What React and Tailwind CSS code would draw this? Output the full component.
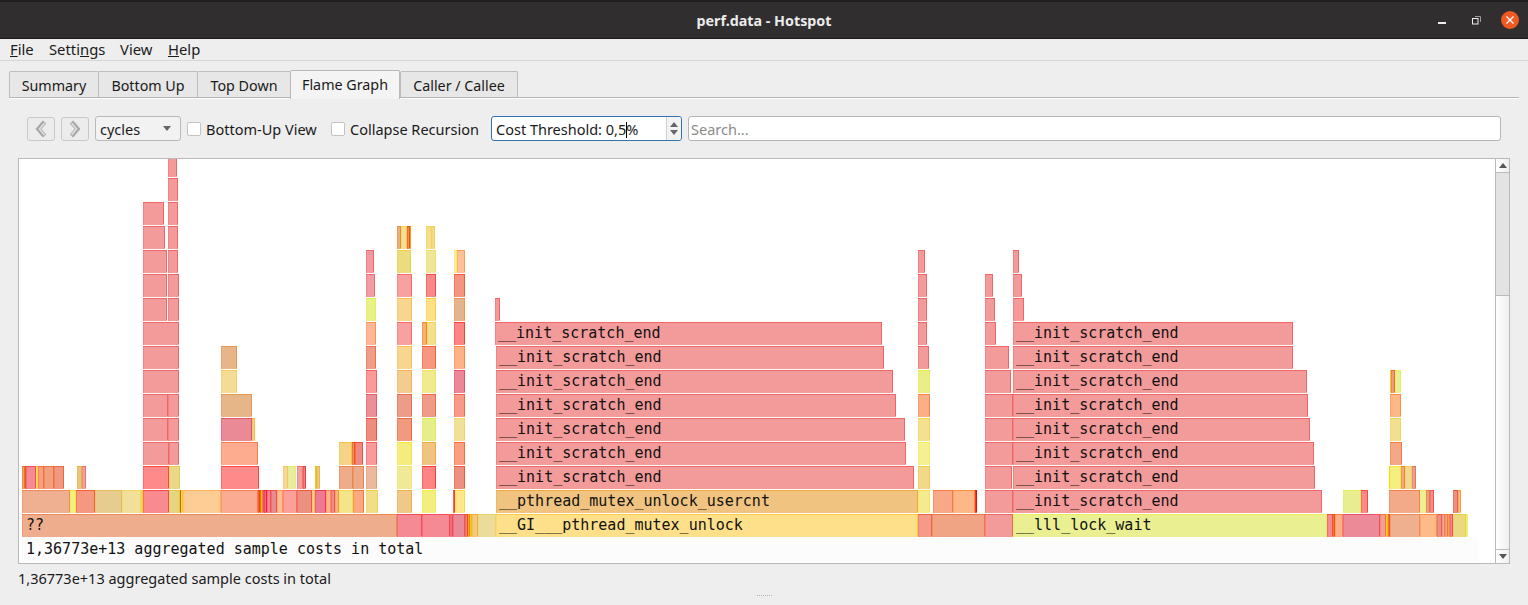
import React from 'react';

const MONO = "font-['DejaVu_Sans_Mono',monospace]";
const SANS = "font-['Noto_Sans',sans-serif]";

const INIT = '__init_scratch_end';
const PINK = '#f39a9a';

// frames per row, row 0 is the bottom one: [x1, x2, fill, label]
const rows = [
  [
    [22, 397, '#eeae8e', '??'], [397, 422, '#f48a94'], [422, 450, '#f58a94'], [450, 451, '#f2a090'], [451, 453, '#f58a94'],
    [453, 465, '#e88a9a'], [465, 468, '#f08a70'], [468, 470, '#f9b060'], [470, 472, '#f0d060'], [472, 478, '#f5c880'],
    [478, 496, '#ecdc9a'], [496, 918, '#ffe08a', '__GI___pthread_mutex_unlock'], [918, 932, '#f59a88'], [932, 985, '#f0a484'],
    [985, 1013, PINK], [1013, 1327, '#eaef92', '__lll_lock_wait'], [1327, 1333, '#f48a90'], [1333, 1335, '#f09050'],
    [1335, 1343, '#fbb08a'], [1343, 1380, '#ec8a9a'], [1380, 1386, '#f3a090'], [1386, 1388, '#f0d060'], [1388, 1390, '#f09060'],
    [1390, 1420, '#efb090'], [1420, 1437, '#feba88'], [1437, 1442, '#e89088'], [1442, 1445, '#f2a898'], [1445, 1448, '#f0a880'],
    [1448, 1450, '#f8b080'], [1450, 1453, '#f08a90'], [1453, 1466, '#ead980'], [1466, 1468, '#edf09a'],
  ],
  [
    [22, 70, '#eeb090'], [70, 76, '#f5ee80'], [76, 95, '#f5987f'], [95, 122, '#e6cc8e'], [122, 141, '#f1e09a'], [141, 143, '#f5e070'],
    [143, 169, '#f98a90'], [169, 180, '#e5d580'], [180, 181, '#f09050'], [181, 183, '#f5e070'], [183, 221, '#fdcd95'],
    [221, 258, '#fcab93'], [258, 260, '#f08060'], [260, 261, '#f0a040'], [261, 262, '#f5d060'], [262, 264, '#f09080'],
    [264, 267, '#f26a80'], [267, 271, '#f58a90'], [271, 277, '#e88a90'], [277, 283, '#fdbd90'], [283, 297, '#fca09a'],
    [297, 312, '#ec9080'], [312, 315, '#f8d090'], [315, 326, '#ee7a90'], [326, 331, '#fdb58a'], [331, 335, '#f08a90'],
    [335, 339, '#f0b880'], [339, 353, '#f5e58a'], [353, 364, '#f9a880'], [366, 378, '#f2dd88'], [397, 412, '#f0c888'],
    [422, 436, '#f2ee80'], [453, 455, '#f08080'], [455, 465, '#ffe78a'],
    [496, 918, '#f0c480', '__pthread_mutex_unlock_usercnt'], [918, 930, '#f5ea90'], [933, 953, '#f9a888'], [953, 975, '#feb888'],
    [975, 977, '#f06030'], [985, 1013, PINK], [1013, 1322, PINK, INIT], [1343, 1361, '#e8ee90'], [1361, 1368, '#ff8a8a'],
    [1389, 1420, '#f3aa88'], [1420, 1426, '#eeee9a'], [1426, 1430, '#eaa080'], [1430, 1434, '#f49090'], [1453, 1458, '#ee9080'],
    [1458, 1461, '#fbbc88'],
  ],
  [
    [22, 25, '#f0a070'], [25, 26, '#d89040'], [26, 36, '#f48a94'], [36, 38, '#f5e080'], [38, 44, '#f5a080'], [44, 54, '#f2a080'],
    [54, 64, '#ef9a80'], [77, 82, '#e8c580'], [82, 86, '#f2a0a0'], [143, 169, '#ff8a8a'], [169, 180, '#e8d888'], [221, 259, '#ff8a8a'],
    [283, 288, '#f5d898'], [288, 296, '#e8eca0'], [297, 303, '#f2a0a0'], [303, 306, '#f08080'], [315, 317, '#e8d060'], [317, 320, '#f0c890'],
    [339, 353, '#eeac8a'], [353, 364, '#edaa88'], [366, 377, '#ebb8a0'], [397, 412, '#f0ea98'], [422, 436, '#ff8585'], [454, 465, '#ec9080'],
    [496, 914, PINK, INIT], [918, 930, '#f0da88'], [985, 1012, PINK], [1013, 1315, PINK, INIT], [1389, 1390, '#f5e860'], [1390, 1401, '#f5ee80'],
    [1401, 1405, '#f0aa80'], [1405, 1412, '#f0da90'], [1412, 1416, '#e8a090'],
  ],
  [
    [143, 168.5, PINK], [168.5, 179, PINK], [221, 258, '#fdac90'], [339, 352, '#f5d488'], [352, 355, '#f09060'], [355, 363, '#f08a80'],
    [366, 377, '#fc9a9a'], [397, 412, '#f5ec80'], [422, 436, '#f0c480'], [454, 465, '#f8a080'], [496, 906, PINK, INIT], [918, 930, '#f6f095'],
    [985, 1013, PINK], [1013, 1314, PINK, INIT], [1390, 1402, '#f5a888'],
  ],
  [
    [143, 167.5, PINK], [167.5, 179, PINK], [221, 252, '#ea8a96'], [252, 255, '#f5d088'], [366, 377, '#ee8c80'], [397, 412, '#f09a80'],
    [422, 436, '#e6ee8a'], [454, 465, '#f0e09a'], [496, 905, PINK, INIT], [918, 930, '#f4e08e'], [985, 1013, PINK], [1013, 1310, PINK, INIT],
    [1390, 1401, '#f0e090'],
  ],
  [
    [143, 167.5, PINK], [167.5, 179, PINK], [221, 252, '#e6b588'], [366, 377, '#ec9098'], [397, 412, '#ec9c88'], [422, 436, '#ee9c88'],
    [454, 465, '#f89a88'], [496, 896, PINK, INIT], [918, 930, '#f9b088'], [985, 1013, PINK], [1013, 1308, PINK, INIT], [1390, 1401, '#feb888'],
  ],
  [
    [143, 179, PINK], [221, 237, '#f5dc95'], [366, 377, '#fc9a9a'], [397, 412, '#f4cc90'], [422, 436, '#f0ea90'], [454, 465, '#ea8898'],
    [496, 893, PINK, INIT], [918, 930, '#eaee88'], [985, 1011, PINK], [1013, 1307, PINK, INIT], [1390, 1391, '#f0e060'], [1391, 1395, '#f09a80'],
    [1395, 1401, '#e8f090'],
  ],
  [
    [143, 179, PINK], [221, 237, '#e8b48a'], [366, 376, '#ee9e88'], [397, 412, '#f8d690'], [422, 436, '#f69880'], [454, 465, '#feb288'],
    [496, 884, PINK, INIT], [918, 929, PINK], [985, 1009, PINK], [1013, 1293, PINK, INIT],
  ],
  [
    [143, 179, PINK], [366, 376, '#feb898'], [397, 412, '#f9a0a0'], [422, 427, '#f8b070'], [427, 436, '#f2e090'], [454, 465, '#ff8585'],
    [495, 882, PINK, INIT], [918, 927, PINK], [985, 996, PINK], [1013, 1293, PINK, INIT],
  ],
  [
    [143, 166.5, PINK], [168, 179, PINK], [366, 376, '#e8f08a'], [397, 412, '#f8d690'], [426, 436, '#ffe188'], [454, 465, '#e6b48c'],
    [495, 500, PINK], [918, 927, PINK], [985, 995, PINK], [1013, 1024, PINK],
  ],
  [
    [143, 167, PINK], [168, 179, PINK], [366, 375, '#f09ca2'], [397, 412, '#f9a0a0'], [426, 436, '#f98a8a'], [454, 465, '#f59480'],
    [918, 927, PINK], [985, 993, PINK], [1013, 1022, PINK],
  ],
  [
    [143, 167, PINK], [168, 178, PINK], [366, 374, '#f29aa0'], [397, 411, '#ebdc80'], [426, 436, '#efe69a'], [454, 457, '#f8f09a'],
    [457, 465, '#fec098'], [918, 925, PINK], [1013, 1019, PINK],
  ],
  [
    [143, 165, PINK], [168, 178, PINK], [397, 401, '#e8b080'], [401, 407, '#f5e090'], [407, 410, '#f08a60'], [410, 411, '#f0c040'],
    [426, 432, '#f3de90'], [432, 435, '#f3de90'],
  ],
  [[143, 164, PINK], [168, 178, PINK]],
  [[168, 178, PINK]],
  [[168, 177, PINK]],
];

// border is the fill with its saturation pushed up
const edge = (hex) => {
  const c = [1, 3, 5].map((i) => parseInt(hex.slice(i, i + 2), 16));
  const max = Math.max(...c);
  return `rgb(${c.map((v) => Math.max(0, Math.round(max - (max - v) * 1.6))).join(',')})`;
};

const Frame = ({ row, x1, x2, fill, label }) => {
  const y = 514 - row * 24;
  const stroke = edge(fill);
  return (
    <g>
      <rect x={x1} y={y} width={x2 - x1} height={23} fill={fill} shapeRendering="crispEdges" />
      <path d={`M${x1} ${y + 0.5}H${x2}M${x2 - 0.5} ${y}V${y + 22}`} stroke={stroke} fill="none" shapeRendering="crispEdges" />
      <path d={`M${x1 + 0.5} ${y}V${y + 23}`} stroke={stroke} strokeOpacity="0.45" fill="none" shapeRendering="crispEdges" />
      {label && (
        <text x={x1 + (label === '??' ? 4 : 3)} y={y + 16} fill="#111" className={`${MONO} text-[15px]`}>
          {label}
        </text>
      )}
    </g>
  );
};

const FlameChart = () => (
  <svg viewBox="19 159 1476 404" className="w-[1476px] h-[404px] bg-white block shrink-0">
    <rect x="22" y="537" width="1457" height="24" fill="#fcfcfc" />
    <text x="26" y="554" fill="#111" className={`${MONO} text-[15px]`}>
      1,36773e+13 aggregated sample costs in total
    </text>
    {rows.map((frames, row) =>
      frames.map(([x1, x2, fill, label]) => (
        <Frame key={`${row}-${x1}`} row={row} x1={x1} x2={x2} fill={fill} label={label} />
      ))
    )}
  </svg>
);

const Tab = ({ label, width, active }) =>
  active ? (
    <div
      style={{ width }}
      className="h-[29px] -mb-px bg-[#f4f4f4] border border-b-0 border-[#b9b9b9] rounded-t-[2px] flex items-center justify-center text-[14.3px] text-[#1a1a1a] relative z-10"
    >
      {label}
    </div>
  ) : (
    <div
      style={{ width }}
      className="h-[26px] mt-[1px] pt-[2px] bg-[#e7e7e7] border border-b-0 border-[#bdbdbd] -mr-px rounded-t-[2px] flex items-center justify-center text-[14.3px] text-[#1a1a1a]"
    >
      {label}
    </div>
  );

const Chevron = ({ left }) => (
  <svg width="14" height="18" viewBox="0 0 14 18">
    <path d={left ? 'M10.500 2L4.500 9l6 7' : 'M3.500 2l6 7-6 7'} fill="none" stroke="#a6a6a6" strokeWidth="4.400" />
    <path d={left ? 'M10.500 3L5.500 9l5 6' : 'M3.500 3l5 6-5 6'} fill="none" stroke="#dedede" strokeWidth="1.800" />
  </svg>
);

const NavButton = ({ left }) => (
  <div className="w-7 h-6 border border-[#c8c8c8] rounded-[3px] bg-[#ececec] flex items-center justify-center">
    <Chevron left={left} />
  </div>
);

const Check = ({ label }) => (
  <div className="flex items-center gap-[5px]">
    <div className="w-[14px] h-[14px] bg-white border border-[#c4c4c4] rounded-[2px]" />
    <span className="pt-[2px]">{label}</span>
  </div>
);

export default function App() {
  return (
    <div className={`w-[1528px] h-[605px] overflow-hidden bg-[#eeeeee] flex flex-col text-[14.5px] text-[#1a1a1a] ${SANS}`}>
      {/* window title bar */}
      <div className="h-[39px] shrink-0 bg-[#302e2e] border-t-2 border-t-[#1e1e1e] border-b border-b-[#1a1a1a] flex items-center relative">
        <div className="w-full text-center text-[14.3px] font-bold text-[#ebebeb] pt-[1px]">perf.data - Hotspot</div>
        <svg width="8" height="2" className="absolute left-[1438px] top-[20px]">
          <rect width="8" height="2" fill="#eee" />
        </svg>
        <svg width="9" height="9" viewBox="0 0 9 9" className="absolute left-[1472px] top-[14px]">
          <path d="M3 .5h5.500v5.500" fill="none" stroke="#9a9a9a" />
          <rect x=".5" y="2.500" width="5.500" height="5.500" fill="none" stroke="#eee" />
        </svg>
        <div className="absolute left-[1501px] top-[9px] w-[18px] h-[18px] rounded-full bg-[#ef5a22] flex items-center justify-center">
          <svg width="8" height="8" viewBox="0 0 8 8">
            <path d="M.5.500l7 7M7.500.500l-7 7" stroke="#fff" strokeWidth="1.300" />
          </svg>
        </div>
      </div>

      {/* menu */}
      <div className="h-[22px] shrink-0 border-b border-[#d6d6d6] flex items-center pl-[10px] text-[14.8px]">
        <span className="w-[39px]"><u>F</u>ile</span>
        <span className="w-[71px]">Setti<u>n</u>gs</span>
        <span className="w-[48px]">View</span>
        <span><u>H</u>elp</span>
      </div>

      {/* tabs */}
      <div className="mt-[9px] mx-[9px] w-[1510px] h-[28px] shrink-0 border-b border-[#b5b5b5] shadow-[0_1px_0_#ffffff] flex items-start">
        <Tab label="Summary" width={90} />
        <Tab label="Bottom Up" width={100} />
        <Tab label="Top Down" width={94} />
        <Tab label="Flame Graph" width={110} active />
        <Tab label="Caller / Callee" width={118} />
      </div>

      {/* toolbar */}
      <div className="mt-[18px] h-[25px] shrink-0 flex items-center pl-[27px]">
        <NavButton left />
        <div className="w-[6px]" />
        <NavButton />
        <div className="ml-[6px] w-[86px] h-[25px] bg-[#f2f2f2] border border-[#b9b9b9] rounded-[3px] flex items-center justify-between pl-[4px] pr-[9px]">
          <span className="pt-[2px]">cycles</span>
          <svg width="8" height="5" viewBox="0 0 8 5"><path d="M0 0h8L4 5z" fill="#666" /></svg>
        </div>
        <div className="ml-[6px] w-[144px]"><Check label="Bottom-Up View" /></div>
        <div className="w-[160px]"><Check label="Collapse Recursion" /></div>
        <div className="w-[191px] h-[25px] bg-white border border-[#2f74b0] rounded-[3px] flex items-center justify-between pl-[4px]">
          <span className="whitespace-nowrap pt-[2px]">
            Cost Threshold: 0,5<span className="inline-block w-px h-[16px] bg-black -mr-px align-[-3px]" />%
          </span>
          <div className="w-[15px] h-full border-l border-[#cfcfcf] bg-[#f3f3f3] rounded-r-[3px] flex flex-col items-center justify-center gap-[3px]">
            <svg width="8" height="5" viewBox="0 0 8 5"><path d="M4 0l4 5H0z" fill="#666" /></svg>
            <svg width="8" height="5" viewBox="0 0 8 5"><path d="M0 0h8L4 5z" fill="#666" /></svg>
          </div>
        </div>
        <div className="ml-[6px] w-[813px] h-[25px] bg-white border border-[#b5b5b5] rounded-[3px] flex items-center pl-[2px] text-[#8a8a8a]">
          <span className="pt-[2px]">Search...</span>
        </div>
      </div>

      {/* flame graph panel */}
      <div className="mt-[17px] ml-[18px] w-[1492px] h-[406px] shrink-0 border border-[#b9b9b9] flex">
        <FlameChart />
        <div className="flex-1 border-l border-[#bcbcbc] flex flex-col bg-gradient-to-r from-[#ffffff] to-[#f0f0f0]">
          <div className="h-[13px] shrink-0 flex items-center justify-center">
            <svg width="8" height="5" viewBox="0 0 8 5"><path d="M4 0l4 5H0z" fill="#555" /></svg>
          </div>
          <div className="h-[124px] shrink-0 bg-[#e3e3e3] border-y border-[#bcbcbc]" />
          <div className="flex-1" />
          <div className="h-[14px] shrink-0 border-t border-[#bcbcbc] flex items-center justify-center">
            <svg width="8" height="5" viewBox="0 0 8 5"><path d="M0 0h8L4 5z" fill="#555" /></svg>
          </div>
        </div>
      </div>

      {/* status + resize grip */}
      <div className="pl-[18px] pt-[4px] text-[14.5px] leading-[20px]">1,36773e+13 aggregated sample costs in total</div>
      <div className="mt-[7px] flex justify-center gap-px">
        {[0, 1, 2, 3, 4, 5, 6, 7].map((i) => (
          <div key={i} className="w-px h-px bg-[#b0b0b0]" />
        ))}
      </div>
    </div>
  );
}
